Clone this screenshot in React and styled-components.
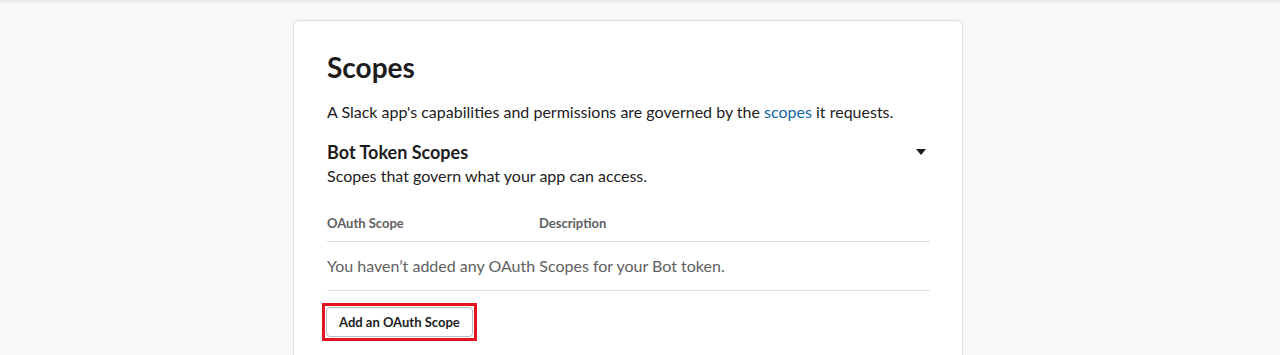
import React from "react";
import styled, { createGlobalStyle } from "styled-components";

const Global = createGlobalStyle`
  html, body { margin: 0; padding: 0; }
  body {
    background: #f8f8f8;
    font-family: Lato, "Noto Sans", sans-serif;
    color: #1d1c1d;
    -webkit-font-smoothing: antialiased;
  }
`;

const Page = styled.div`
  height: 355px;
  overflow: hidden;
  display: flex;
  justify-content: center;
  align-items: flex-start;
  padding: 20px 24px 0 0;
  box-sizing: border-box;
  background: linear-gradient(to bottom, #e4e4e4 0px, #f1f1f1 2px, #f8f8f8 5px, #f8f8f8 100%);
`;

const Card = styled.section`
  width: 670px;
  box-sizing: border-box;
  background: #fff;
  border: 1px solid #dddddd;
  border-radius: 6px;
  padding: 29px 32px 60px 33px;
  flex-shrink: 0;
`;

const Title = styled.h1`
  margin: 0;
  font-size: 28px;
  line-height: 34px;
  font-weight: 700;
`;

const Lead = styled.p`
  margin: 17px 0 0;
  font-size: 16px;
  line-height: 22px;
`;

const Link = styled.a`
  color: #1264a3;
  text-decoration: none;
`;

const SectionHead = styled.div`
  margin-top: 17px;
  display: flex;
  justify-content: space-between;
  align-items: flex-start;
`;

const SectionTitle = styled.h2`
  margin: 0;
  font-size: 18px;
  line-height: 24px;
  font-weight: 700;
`;

const Caret = styled.span`
  margin: 9px 4px 0 0;
  width: 0;
  height: 0;
  border-left: 5px solid transparent;
  border-right: 5px solid transparent;
  border-top: 6px solid #1d1c1d;
`;

const SectionSub = styled.p`
  margin: 1px 0 0;
  font-size: 16px;
  line-height: 22px;
`;

const Table = styled.div`
  margin-top: 27px;
`;

const HeadRow = styled.div`
  display: grid;
  grid-template-columns: 212px 1fr;
  padding-bottom: 9px;
  border-bottom: 1px solid #dddddd;
`;

const HeadCell = styled.span`
  font-size: 13px;
  line-height: 18px;
  font-weight: 700;
  color: #616061;
`;

const EmptyRow = styled.div`
  padding: 13px 0 13px;
  font-size: 16px;
  line-height: 22px;
  color: #616061;
  border-bottom: 1px solid #dddddd;
`;

const Highlight = styled.span`
  display: inline-flex;
  margin: 12px 0 0 -5px;
  padding: 1px;
  border: 3px solid #e3131f;
`;

const Button = styled.button`
  height: 30px;
  padding: 0 12px;
  background: #fff;
  border: 1px solid #bbbbbb;
  border-radius: 4px;
  font-family: Lato, "Noto Sans", sans-serif;
  font-size: 13px;
  font-weight: 700;
  color: #1d1c1d;
  cursor: pointer;
`;

export default function App() {
  return (
    <>
      <Global />
      <Page>
        <Card>
          <Title>Scopes</Title>
          <Lead>
            A Slack app's capabilities and permissions are governed by the{" "}
            <Link href="#">scopes</Link> it requests.
          </Lead>
          <SectionHead>
            <SectionTitle>Bot Token Scopes</SectionTitle>
            <Caret />
          </SectionHead>
          <SectionSub>Scopes that govern what your app can access.</SectionSub>
          <Table>
            <HeadRow>
              <HeadCell>OAuth Scope</HeadCell>
              <HeadCell>Description</HeadCell>
            </HeadRow>
            <EmptyRow>You haven’t added any OAuth Scopes for your Bot token.</EmptyRow>
          </Table>
          <Highlight>
            <Button>Add an OAuth Scope</Button>
          </Highlight>
        </Card>
      </Page>
    </>
  );
}
